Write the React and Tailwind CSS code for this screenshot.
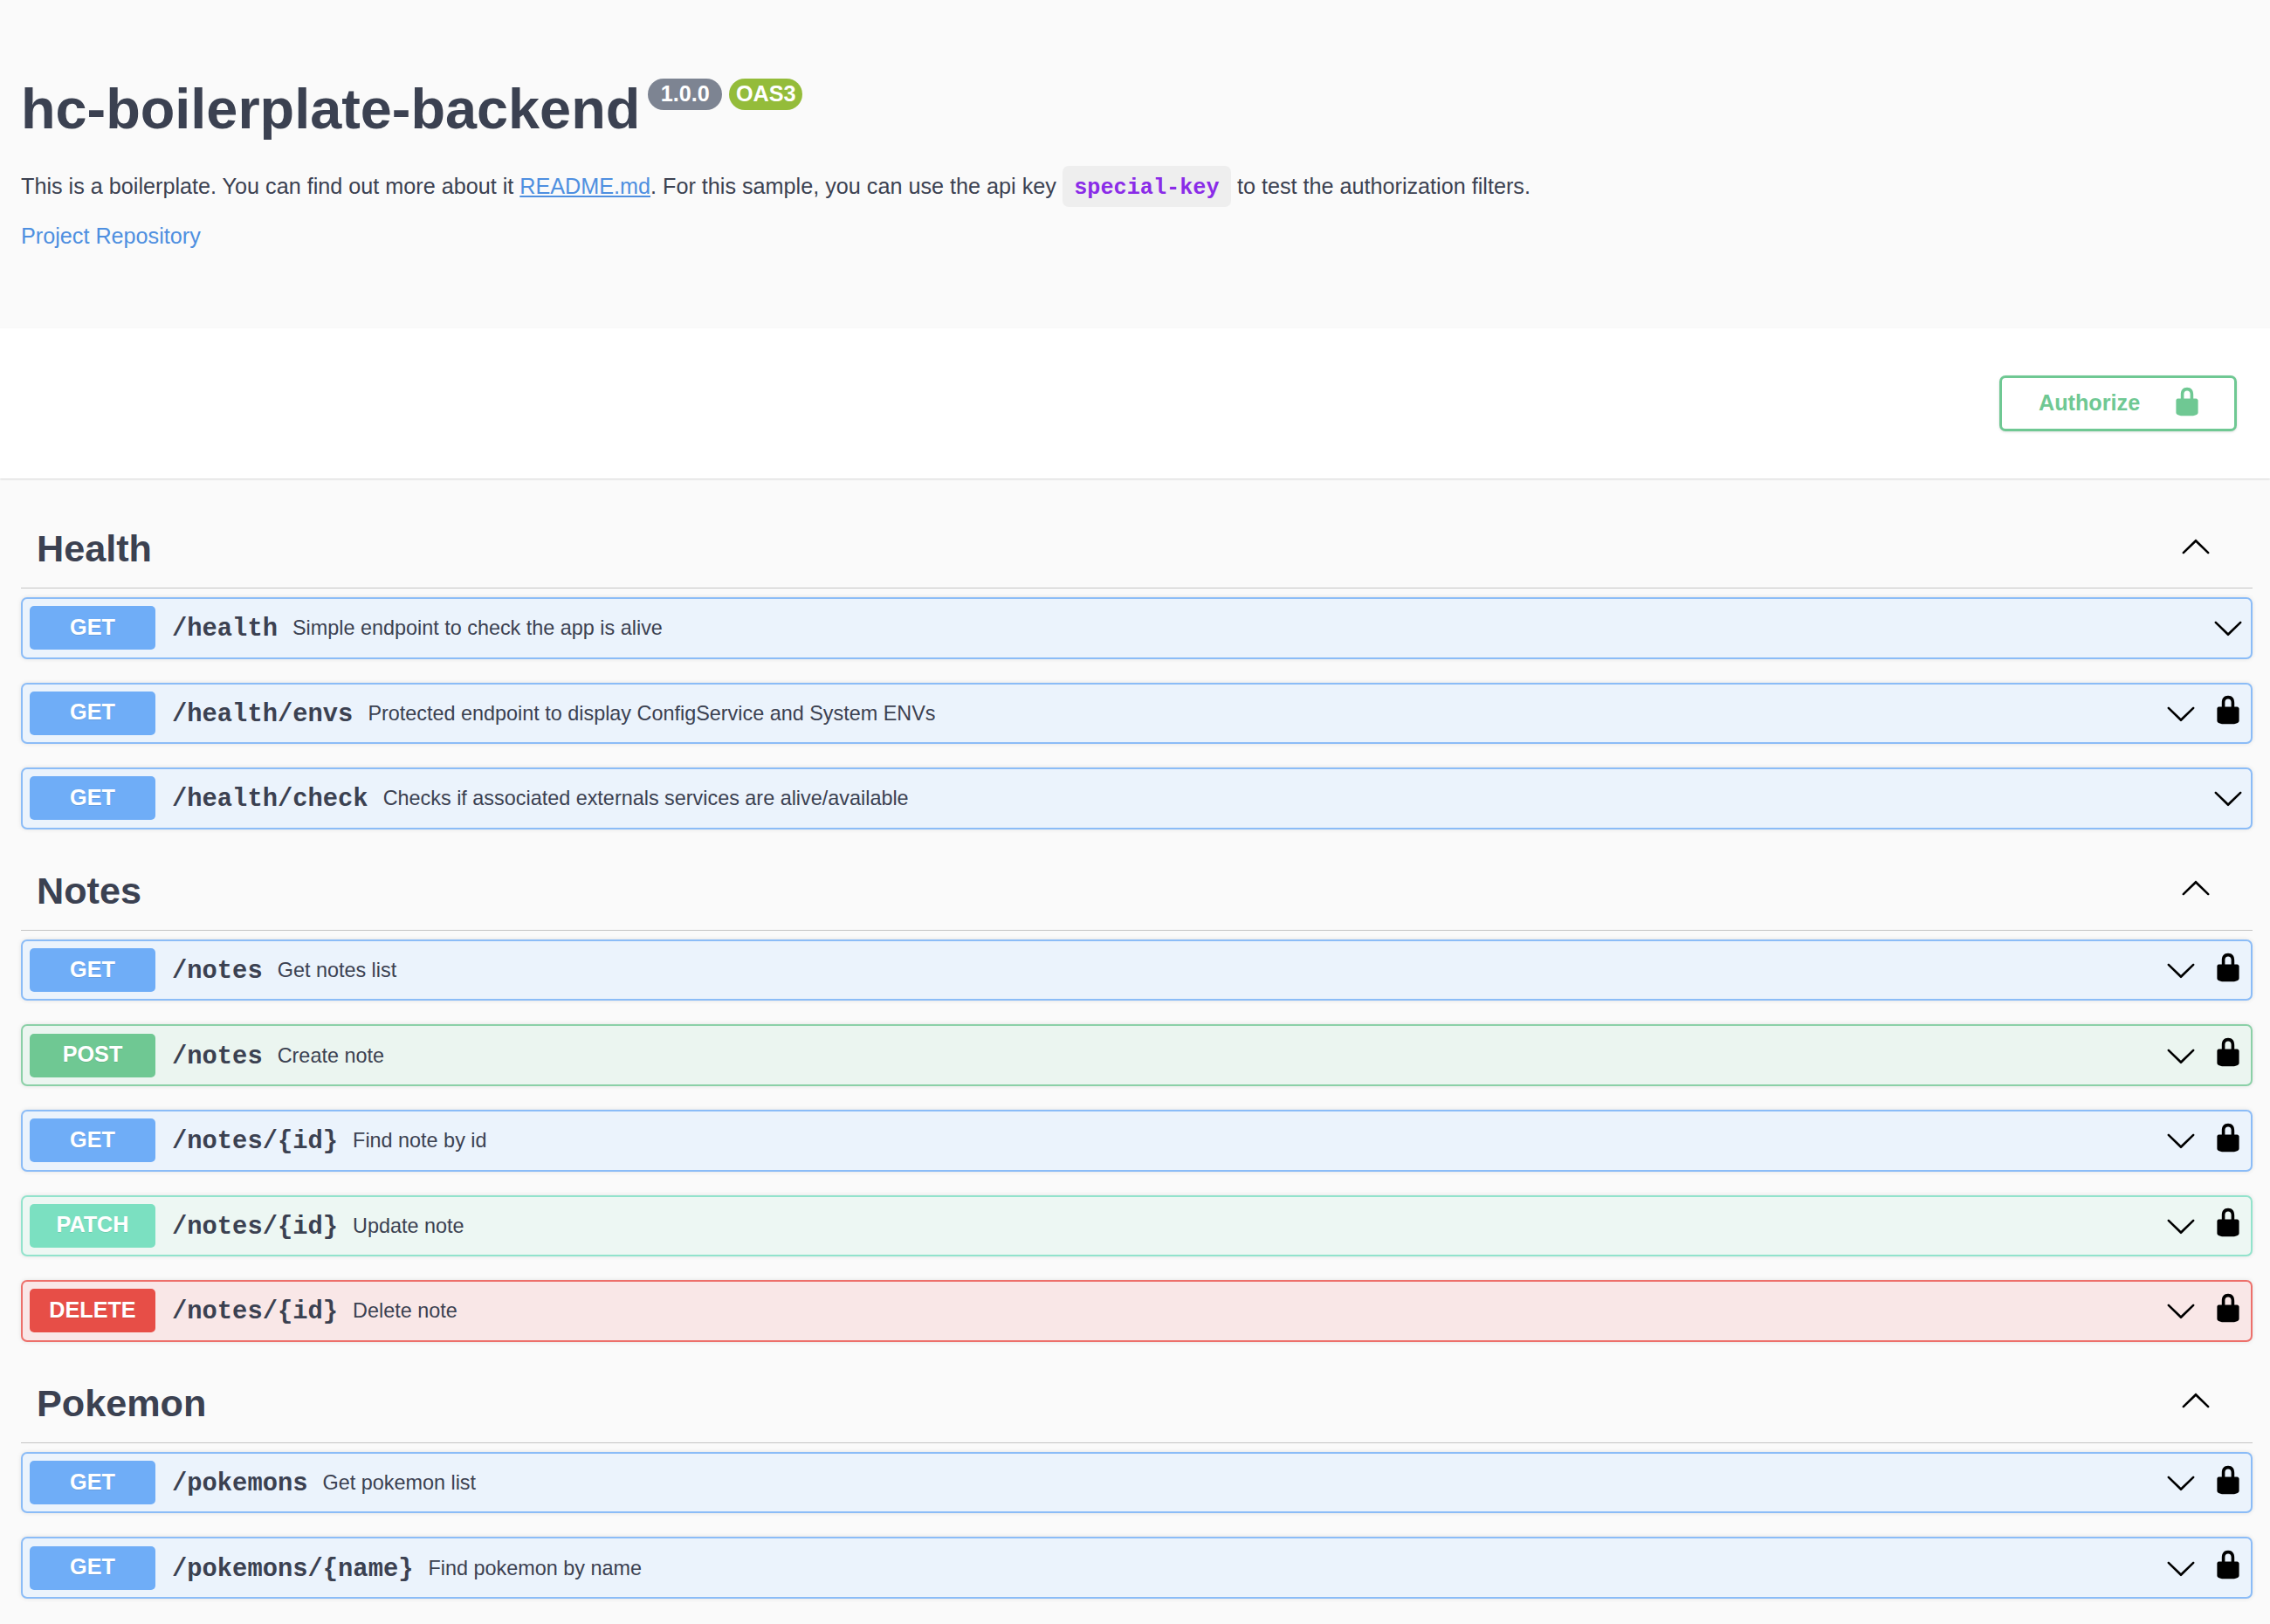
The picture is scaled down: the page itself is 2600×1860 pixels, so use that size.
import React from 'react';

const lockPath =
  'M15.8 8H14V5.6C14 2.703 12.665 1 10 1 7.334 1 6 2.703 6 5.6V8H4c-.553 0-1 .646-1 1.199V17c0 .549.428 1.139.951 1.307l1.197.387C5.672 18.861 6.55 19 7.1 19h5.8c.549 0 1.428-.139 1.951-.307l1.196-.387c.524-.167.953-.757.953-1.306V9.199C17 8.646 16.352 8 15.8 8zM12 8H8V5.199C8 3.754 8.797 3 10 3c1.203 0 2 .754 2 2.199V8z';
const arrowPath =
  'M17.418 6.109c.272-.268.709-.268.979 0s.271.701 0 .969l-7.908 7.83c-.27.268-.707.268-.979 0l-7.908-7.83c-.27-.268-.27-.701 0-.969.271-.268.709-.268.979 0L10 13.25l7.418-7.141z';

const Lock = ({ className }) => (
  <svg viewBox="0 0 20 20" className={className} fill="currentColor">
    <path d={lockPath} />
  </svg>
);

const Arrow = ({ className }) => (
  <svg viewBox="0 0 20 20" className={className} fill="currentColor">
    <path d={arrowPath} />
  </svg>
);

// Colours per http method
const methods = {
  GET: { row: 'bg-[#ebf3fc] border-[#8bbcf7]', btn: 'bg-[#6fadf7]' },
  POST: { row: 'bg-[#ebf5f0] border-[#8bd0a7]', btn: 'bg-[#6fc893]' },
  PATCH: { row: 'bg-[#edf7f3] border-[#92e3cc]', btn: 'bg-[#7be0c1]' },
  DELETE: { row: 'bg-[#f9e7e7] border-[#ed706b]', btn: 'bg-[#e74e47]' },
};

const sections = [
  {
    name: 'Health',
    ops: [
      { method: 'GET', path: '/health', summary: 'Simple endpoint to check the app is alive', open: true },
      { method: 'GET', path: '/health/envs', summary: 'Protected endpoint to display ConfigService and System ENVs' },
      { method: 'GET', path: '/health/check', summary: 'Checks if associated externals services are alive/available', open: true },
    ],
  },
  {
    name: 'Notes',
    ops: [
      { method: 'GET', path: '/notes', summary: 'Get notes list' },
      { method: 'POST', path: '/notes', summary: 'Create note' },
      { method: 'GET', path: '/notes/{id}', summary: 'Find note by id' },
      { method: 'PATCH', path: '/notes/{id}', summary: 'Update note' },
      { method: 'DELETE', path: '/notes/{id}', summary: 'Delete note' },
    ],
  },
  {
    name: 'Pokemon',
    ops: [
      { method: 'GET', path: '/pokemons', summary: 'Get pokemon list' },
      { method: 'GET', path: '/pokemons/{name}', summary: 'Find pokemon by name' },
    ],
  },
];

function Operation({ op }) {
  const style = methods[op.method];
  return (
    <div
      className={`flex items-center h-[70.6px] mb-[27px] pl-[8px] pr-[8px] rounded-[7px] border-2 shadow-[0_0_5px_rgba(0,0,0,0.1)] ${style.row}`}
    >
      <div
        className={`w-[144px] h-[50px] pb-[1px] rounded-[5px] flex items-center justify-center text-white font-bold text-[25.2px] [text-shadow:0_1px_0_rgba(0,0,0,0.1)] ${style.btn}`}
      >
        {op.method}
      </div>
      <span className="ml-[19px] pt-[3px] font-['Liberation_Mono',monospace] font-bold text-[28.8px] text-[#3b4151]">
        {op.path}
      </span>
      <span className="ml-[17px] pt-[1px] text-[23.4px] text-[#3b4151]">{op.summary}</span>
      <div className="flex-1" />
      {op.open ? (
        <Arrow className="w-[36px] h-[36px] text-black" />
      ) : (
        <>
          <Arrow className="w-[36px] h-[36px] text-black" />
          <Lock className="w-[36px] h-[36px] ml-[18px] -mt-[7px] text-black" />
        </>
      )}
    </div>
  );
}

function Section({ section }) {
  return (
    <div>
      <div className="h-[89px] mb-[10px] pb-[1px] flex items-center justify-between border-b border-[#c4c4c4] pl-[18px] pr-[47px]">
        <h3 className="text-[43.2px] font-bold text-[#3b4151]">{section.name}</h3>
        <Arrow className="w-[36px] h-[36px] -mt-[4px] text-black rotate-180" />
      </div>
      {section.ops.map((op, i) => (
        <Operation key={i} op={op} />
      ))}
    </div>
  );
}

export default function App() {
  return (
    <div className="w-[2600px] h-[1860px] overflow-hidden bg-[#fafafa] font-['Liberation_Sans',Arial,sans-serif] text-[#3b4151]">
      <div className="h-[376px] pt-[84px] pl-[24px]">
        <div className="flex items-start">
          <h1 className="text-[64.8px] leading-[81px] font-bold">hc-boilerplate-backend</h1>
          <span className="ml-[9px] mt-[6px] h-[36px] w-[85px] rounded-[18px] bg-[#7d8492] text-white font-bold text-[25.2px] flex items-center justify-center">
            1.0.0
          </span>
          <span className="ml-[8px] mt-[6px] h-[36px] w-[84px] rounded-[18px] bg-[#94bc3a] text-white font-bold text-[25.2px] flex items-center justify-center">
            OAS3
          </span>
        </div>
        <p className="mt-[25px] text-[25.2px] leading-[47px]">
          This is a boilerplate. You can find out more about it{' '}
          <a className="text-[#4e8fe0] underline">README.md</a>. For this sample, you can use the api key{' '}
          <code className="inline-block h-[47px] px-[13.4px] rounded-[7px] bg-[#eeeeee] font-['Liberation_Mono',monospace] font-bold text-[25.2px] leading-[51px] text-[#8a2be8] align-top">
            special-key
          </code>{' '}
          to test the authorization filters.
        </p>
        <a className="block mt-[15px] text-[25.2px] text-[#4e8fe0]">Project Repository</a>
      </div>

      <div className="h-[172px] bg-white shadow-[0_1px_2px_rgba(0,0,0,0.15)] flex items-center justify-end pr-[38px]">
        <button className="w-[272px] h-[64px] pl-[42px] rounded-[7px] border-[3px] border-[#6fc893] bg-white shadow-[0_1px_3px_rgba(0,0,0,0.12)] flex items-center text-[#6fc893] font-bold text-[25.2px]">
          <span>Authorize</span>
          <Lock className="w-[36px] h-[36px] ml-[36px] -mt-[5px]" />
        </button>
      </div>

      <div className="pl-[24px] pr-[20px] pt-[37px]">
        {sections.map((s) => (
          <Section key={s.name} section={s} />
        ))}
      </div>
    </div>
  );
}
